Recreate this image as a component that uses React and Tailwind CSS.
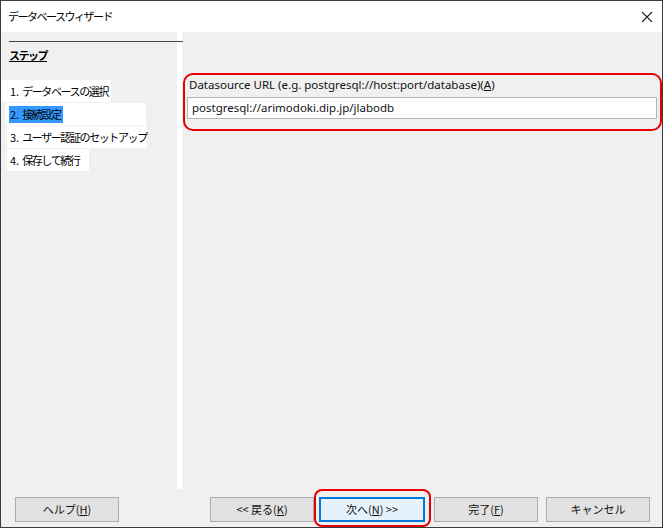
import React from "react";

const jp = { fontFamily: '"Noto Sans CJK JP", "Noto Sans", sans-serif' };
const ui = { fontFamily: '"Noto Sans", "Noto Sans CJK JP", sans-serif' };

const steps = [
  { id: 1, num: "1.", label: "データベースの選択", w: "w-[110px]", ml: "ml-0", pl: "pl-[9px]" },
  { id: 2, num: "2.", label: "接続設定", w: "w-[141px]", ml: "ml-[4px]", active: true },
  { id: 3, num: "3.", label: "ユーザー認証のセットアップ", w: "w-[140px]", ml: "ml-[6px]", pl: "pl-[3px]" },
  { id: 4, num: "4.", label: "保存して続行", w: "w-[82px]", ml: "ml-[6px]", pl: "pl-[3px]" },
];

const Btn = ({ children, primary, className = "" }) => (
  <button
    className={`h-[25px] w-[104px] text-[11px] text-[#111] flex items-center justify-center whitespace-pre ${
      primary ? "border-2 border-[#0078d7] bg-[#e5f1fb]" : "border border-[#adadad] bg-[#e1e1e1]"
    } ${className}`}
    style={jp}
  >
    {children}
  </button>
);

export default function App() {
  return (
    <div className="w-[664px] h-[529px] bg-white relative">
      <div className="w-[663px] h-[528px] border border-[#3c3c3c] flex flex-col">
        {/* Title bar */}
        <div className="h-[31px] bg-white flex items-center justify-between pl-[7px] pr-[9px]">
          <span className="text-[11px] tracking-[-1.5px] text-black" style={jp}>
            データベースウィザード
          </span>
          <svg width="12" height="12" viewBox="0 0 12 12">
            <path d="M1 1L11 11M11 1L1 11" stroke="#222" strokeWidth="1.1" />
          </svg>
        </div>

        {/* Body */}
        <div className="flex-1 bg-[#f0f0f0] flex flex-col">
          <div className="h-[457px] flex">
            {/* Left steps */}
            <div className="w-[176px] pt-[9px]">
              <div className="relative ml-[8px] mr-[-6px] border-t border-[#444]" />
              <div
                className="ml-[8px] mt-[4px] text-[11px] tracking-[-1.5px] font-bold underline text-black leading-[18px]"
                style={jp}
              >
                ステップ
              </div>
              <div className="mt-[16px] flex flex-col gap-[1px]">
                {steps.map((s) => (
                  <div
                    key={s.id}
                    className={`${s.w} ${s.ml} h-[22px] bg-white flex items-center whitespace-nowrap`}
                  >
                    <span
                      className={`text-[11px] leading-[17px] text-black ${
                        s.active ? "bg-[#3399ff] ml-[4px] pl-[1px] pr-[2px]" : s.pl
                      }`}
                      style={jp}
                    >
                      <span className="mr-[3px]">{s.num}</span>
                      <span className="tracking-[-1.4px]">{s.label}</span>
                    </span>
                  </div>
                ))}
              </div>
            </div>
            <div className="w-[5px] bg-white" />
            {/* Right content */}
            <div className="flex-1 pt-[45px] pl-[5px] pr-[5px]">
              <div className="text-[11.5px] text-[#111] leading-[16px] pl-[2px] whitespace-nowrap" style={ui}>
                Datasource URL (e.g. postgresql://host:port/database)(<span className="underline">A</span>)
              </div>
              <div className="mt-[4px] h-[22px] bg-white border border-[#b4b4b4] flex items-center pl-[4px]">
                <span className="text-[11.5px] text-[#111]" style={ui}>
                  postgresql://arimodoki.dip.jp/jlabodb
                </span>
              </div>
            </div>
          </div>

          {/* Buttons */}
          <div className="flex-1 flex items-start pt-[8px] pl-[14px]">
            <Btn>
              ヘルプ(<span className="underline">H</span>)
            </Btn>
            <Btn className="ml-[91px]">
              {"<< "}戻る(<span className="underline">K</span>)
            </Btn>
            <Btn primary className="ml-[5px] w-[106px]">
              次へ(<span className="underline">N</span>){" >>"}
            </Btn>
            <Btn className="ml-[9px]">
              完了(<span className="underline">F</span>)
            </Btn>
            <Btn className="ml-[8px]">キャンセル</Btn>
          </div>
        </div>
      </div>

      {/* Red annotations */}
      <div className="absolute left-[183px] top-[73px] w-[479px] h-[58px] border-2 border-[#e60000] rounded-[10px] pointer-events-none" />
      <div className="absolute left-[314px] top-[489px] w-[117px] h-[38px] border-2 border-[#e60000] rounded-[8px] pointer-events-none" />
    </div>
  );
}
